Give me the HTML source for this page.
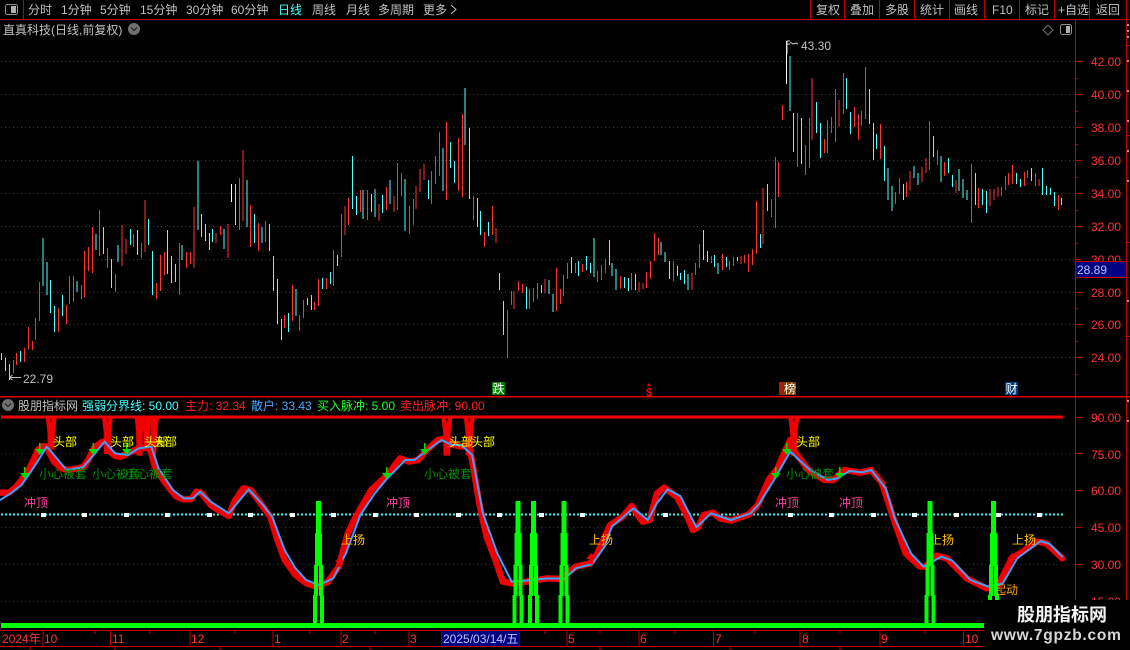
<!DOCTYPE html>
<html><head><meta charset="utf-8"><title>直真科技</title>
<style>
html,body{margin:0;padding:0;background:#000;width:1130px;height:650px;overflow:hidden}
svg{display:block}
text{font-family:"Liberation Sans","WenQuanYi Zen Hei","Noto Sans CJK SC",sans-serif;font-size:12px}
.n{fill:#c0c0c0}
.ax{fill:#ff3232}
.vs{vector-effect:non-scaling-stroke}
</style></head><body>
<svg width="1130" height="650" viewBox="0 0 1130 650" xmlns="http://www.w3.org/2000/svg">
<rect width="1130" height="650" fill="#000"/>

<!-- frame lines -->
<g stroke="#c00000" stroke-width="1" shape-rendering="crispEdges" fill="none">
<path d="M0 19.5H1130M23.5 0V19M810.5 0V19M844.5 0V19M879.5 0V19M914.5 0V19M949.5 0V19M984.5 0V19M1019.5 0V19M1054.5 0V19M1089.5 0V19"/>
<path d="M1075.5 20V600M1126.5 0V600M1126 45.5H1130M1126 135.5H1130M1126 242.5H1130M1126 336.5H1130"/>
<path d="M1075 61.5H1081M1075 78.5H1078M1075 94.5H1081M1075 111.5H1078M1075 127.5H1081M1075 144.5H1078M1075 160.5H1081M1075 177.5H1078M1075 193.5H1081M1075 210.5H1078M1075 226.5H1081M1075 243.5H1078M1075 259.5H1081M1075 292.5H1081M1075 308.5H1078M1075 324.5H1081M1075 341.5H1078M1075 357.5H1081M1075 374.5H1078"/>
<path d="M1075 417.5H1081M1075 453.5H1081M1075 490.5H1081M1075 527.5H1081M1075 564.5H1081"/>
</g>
<path d="M0 396.5H1130" stroke="#e00000" stroke-width="1.5" shape-rendering="crispEdges"/>
<path d="M1128 24V26M1128 30V32M1128 36V38M1128 60V62M1128 90V92M1128 120V122M1128 150V152M1128 180V182M1128 300V302M1128 400V402M1128 420V422" stroke="#a0a0a0" stroke-width="2" shape-rendering="crispEdges"/>

<!-- toolbar -->
<rect x="5.5" y="4.5" width="12" height="10" rx="2" fill="#000" stroke="#909090"/>
<rect x="11" y="6" width="5" height="7" fill="#b0b0b0"/>
<g class="n">
<text x="28" y="14" class="n">分时</text>
<text x="61" y="14" class="n">1分钟</text>
<text x="100" y="14" class="n">5分钟</text>
<text x="140" y="14" class="n">15分钟</text>
<text x="186" y="14" class="n">30分钟</text>
<text x="231" y="14" class="n">60分钟</text>
<text x="278" y="14" fill="#40ffff">日线</text>
<text x="312" y="14" class="n">周线</text>
<text x="346" y="14" class="n">月线</text>
<text x="378" y="14" class="n">多周期</text>
<text x="423" y="14" class="n">更多</text>
<path d="M451 5l5 4.5-5 4.5" fill="none" stroke="#c0c0c0"/>
<text x="816" y="14" class="n">复权</text>
<text x="850" y="14" class="n">叠加</text>
<text x="885" y="14" class="n">多股</text>
<text x="920" y="14" class="n">统计</text>
<text x="954" y="14" class="n">画线</text>
<text x="992" y="14" class="n">F10</text>
<text x="1025" y="14" class="n">标记</text>
<text x="1058" y="14" class="n">+自选</text>
<text x="1096" y="14" class="n">返回</text>
</g>

<!-- title -->
<text x="3" y="34" class="n">直真科技(日线,前复权)</text>
<circle cx="134" cy="29" r="6" fill="#707070"/>
<path d="M131 27.5l3 3 3-3" fill="none" stroke="#222" stroke-width="1.2"/>
<path d="M1048 25l5 5-5 5-5-5z" fill="none" stroke="#707070"/>
<rect x="1060.5" y="24.5" width="11" height="10" rx="2" fill="#000" stroke="#909090"/>
<rect x="1066" y="26" width="4" height="7" fill="#b0b0b0"/>

<!-- top grid -->
<path d="M1 61.5H1075M1 94.5H1075M1 127.5H1075M1 160.5H1075M1 193.5H1075M1 226.5H1075M1 259.5H1075M1 292.5H1075M1 324.5H1075M1 357.5H1075" stroke="#c80000" stroke-dasharray="1 3" shape-rendering="crispEdges"/>

<!-- candlesticks left half -->
<g transform="scale(.36036 1)" fill="none" shape-rendering="crispEdges" stroke-width="2.775">
<path stroke="#ff3232" d="M37 360V373M46 353V365M68 348V362M79 327V349M90 341V350M98 318V340M109 282V321M162 308V332M184 305V324M193 276V304M204 276V302M226 285V299M234 251V297M245 247V271M256 227V273M276 210V256M298 248V268M320 274V292M339 225V266M350 239V254M370 234V247M392 243V258M403 200V252M434 283V299M445 255V291M456 252V275M498 243V295M518 252V268M528 252V264M539 207V268M600 233V243M612 226V235M633 224V258M664 178V230M675 150V221M695 205V247M717 223V251M737 221V242M790 315V328M811 285V321M831 315V331M842 300V318M873 302V310M884 279V306M906 278V289M925 250V286M947 214V257M958 206V235M967 198V225M1000 190V212M1020 190V220M1052 204V221M1072 187V210M1093 196V212M1103 163V210M1114 173V196M1136 206V234M1147 199V225M1155 186V209M1166 169V192M1177 164V180M1197 171V204M1208 156V184M1219 132V176M1239 122V200M1272 138V191M1283 114V197M1314 196V220M1344 232V247M1366 206V235M1377 228V243M1408 310V358M1419 291V305M1427 291V309M1439 281V291M1450 284V293M1470 289V309M1481 288V302M1491 283V299M1513 279V293M1544 268V311M1555 289V304M1564 275V296"/>
<path stroke="#54ffff" d="M4 353V360M15 358V371M57 351V362M120 238V286M131 262V295M140 280V313M151 306V332M173 295V316M214 281V292M267 234V250M287 227V254M309 259V288M328 245V262M362 229V245M381 230V255M412 219V245M423 251V295M465 230V274M476 256V283M487 264V282M505 245V260M550 161V230M559 214V237M570 224V241M581 233V250M590 229V242M622 229V249M653 184V225M686 180V227M706 214V243M727 227V243M748 224V251M759 256V291M770 279V324M781 319V340M800 313V332M822 289V316M853 298V305M864 295V310M895 278V289M917 272V284M936 255V266M978 156V209M989 196V215M1008 190V219M1031 194V212M1041 189V217M1061 195V213M1082 180V204M1124 179V231M1189 180V199M1230 148V191M1250 142V168M1261 161V183M1291 88V145M1303 128V199M1325 198V227M1333 211V235M1355 222V236M1386 273V290M1397 301V335M1461 287V309M1502 285V293M1523 280V294M1534 294V312"/>
<path stroke="#ffffff" d="M642 184V202M26 364V380"/>
</g>
<!-- candlesticks right half -->
<g transform="translate(565 0) scale(.36036 1)" fill="none" shape-rendering="crispEdges" stroke-width="2.775">
<path stroke="#ff3232" d="M7 263V279M29 263V273M48 264V272M90 271V282M101 265V280M112 259V273M154 276V289M185 273V290M206 282V292M217 283V289M226 272V288M237 261V279M248 233V261M259 238V255M301 261V281M353 273V290M362 263V275M373 244V268M406 256V263M437 254V270M457 261V270M467 257V266M489 256V264M498 255V263M509 254V272M520 249V265M531 201V254M550 188V244M573 199V217M584 157V228M592 162V197M603 105V120M645 113V167M667 145V175M678 118V168M686 78V140M720 139V153M729 120V153M740 117V133M751 89V142M760 100V127M773 73V114M803 107V127M814 114V140M823 111V126M834 67V119M875 124V159M917 192V204M928 178V194M948 182V197M958 171V191M991 167V182M1002 158V173M1011 121V170M1033 150V165M1053 162V176M1085 180V193M1128 164V223M1147 188V208M1180 189V206M1190 189V200M1201 187V197M1211 187V196M1222 176V190M1231 173V185M1242 165V184M1275 172V186M1284 170V178M1305 173V186M1316 179V186M1369 195V210"/>
<path stroke="#54ffff" d="M18 257V273M38 261V276M59 256V270M71 263V273M81 238V277M123 240V265M131 263V276M142 269V290M165 277V288M176 278V291M195 274V290M267 242V255M278 252V262M290 261V279M312 266V276M320 273V280M331 270V284M342 274V290M384 230V260M395 251V262M415 255V267M425 263V274M448 257V267M478 257V261M542 234V248M562 184V211M625 56V111M634 113V152M656 118V164M698 102V133M709 123V158M781 78V109M792 112V134M845 89V124M856 123V160M864 134V149M886 146V181M897 168V200M908 186V211M939 184V200M969 166V178M980 173V185M1022 136V157M1044 156V182M1064 158V173M1075 175V187M1094 169V191M1105 179V198M1116 190V200M1139 173V205M1158 189V205M1169 191V213M1253 173V184M1264 179V187M1294 168V181M1325 168V195M1336 186V195M1347 188V195M1358 192V206M1378 198V205"/>
<path stroke="#ffffff" d="M614 41V84"/>
</g>

<!-- hi/lo marks -->
<path d="M787 54V41h3M787 44h3M790 42l3 2 3-1 2 1" fill="none" stroke="#d0d0d0"/>
<text x="801" y="50" fill="#c0c0c0">43.30</text>
<path d="M9.5 364V377.5H21M9.5 377.5l3-2.5M9.5 377.5l3 2.5" fill="none" stroke="#c0c0c0"/>
<text x="23" y="383" fill="#c0c0c0">22.79</text>

<!-- axis labels top -->
<g class="ax">
<text x="1091" y="66" class="ax">42.00</text>
<text x="1091" y="99" class="ax">40.00</text>
<text x="1091" y="132" class="ax">38.00</text>
<text x="1091" y="165" class="ax">36.00</text>
<text x="1091" y="198" class="ax">34.00</text>
<text x="1091" y="231" class="ax">32.00</text>
<text x="1091" y="264" class="ax">30.00</text>
<text x="1091" y="297" class="ax">28.00</text>
<text x="1091" y="329" class="ax">26.00</text>
<text x="1091" y="362" class="ax">24.00</text>
</g>
<rect x="1075.5" y="261.5" width="51" height="16" fill="#000080" stroke="#c00000"/>
<text x="1077" y="274" fill="#c0c0ff">28.89</text>

<!-- signal tags -->
<rect x="492" y="382" width="13" height="13" fill="#008000"/>
<text x="492.5" y="393" fill="#fff">跌</text>
<path d="M649 383l2 3h-4z" fill="#f00"/>
<text x="646" y="396" fill="#f00" style="font-weight:700;font-size:11px">$</text>
<rect x="779" y="382" width="17" height="13" fill="#804000"/>
<rect x="779" y="382" width="5" height="13" fill="#a02010"/>
<text x="784" y="393" fill="#fff">榜</text>
<rect x="1005" y="382" width="13" height="13" fill="#004080"/>
<text x="1005.5" y="393" fill="#fff">财</text>

<!-- lower header -->
<circle cx="8" cy="405" r="6" fill="#707070"/>
<path d="M5 403.5l3 3 3-3" fill="none" stroke="#222" stroke-width="1.2"/>
<text x="18" y="410" fill="#c0c0c0">股朋指标网</text>
<text x="82" y="410" fill="#40ffff">强弱分界线: 50.00</text>
<text x="185" y="410" fill="#ff2020">主力: 32.34</text>
<text x="251" y="410" fill="#4aa8ff">散户: 33.43</text>
<text x="317" y="410" fill="#20ff20">买入脉冲: 5.00</text>
<text x="400" y="410" fill="#ff2020">卖出脉冲: 90.00</text>

<!-- lower grid -->
<path d="M1 453.5H1075M1 490.5H1075M1 527.5H1075M1 564.5H1075M1 601.5H1075" stroke="#a80000" stroke-dasharray="1 3" shape-rendering="crispEdges"/>
<path d="M1 514.5H1063" stroke="#40f0f0" stroke-width="1.6" stroke-dasharray="2 2" shape-rendering="crispEdges"/>
<g fill="#fff">
<rect x="41" y="513" width="5" height="4"/><rect x="82" y="513" width="5" height="4"/><rect x="124" y="513" width="5" height="4"/><rect x="165" y="513" width="5" height="4"/><rect x="207" y="513" width="5" height="4"/><rect x="248" y="513" width="5" height="4"/><rect x="290" y="513" width="5" height="4"/><rect x="331" y="513" width="5" height="4"/><rect x="373" y="513" width="5" height="4"/><rect x="414" y="513" width="5" height="4"/><rect x="456" y="513" width="5" height="4"/><rect x="497" y="513" width="5" height="4"/><rect x="539" y="513" width="5" height="4"/><rect x="580" y="513" width="5" height="4"/><rect x="663" y="513" width="5" height="4"/><rect x="788" y="513" width="5" height="4"/><rect x="829" y="513" width="5" height="4"/><rect x="871" y="513" width="5" height="4"/><rect x="912" y="513" width="5" height="4"/><rect x="954" y="513" width="5" height="4"/><rect x="996" y="513" width="5" height="4"/><rect x="1037" y="513" width="5" height="4"/>
</g>

<!-- sell line with dips -->
<path d="M1 417H1063" stroke="#f00000" stroke-width="3" fill="none"/>
<g transform="translate(0 390) scale(.36036 .33333)" fill="none" stroke="#f00000" stroke-width="4.6" stroke-linejoin="miter">
<path class="vs" d="M133 80L138 125L139 172L145 172L146 125L151 80"/>
<path class="vs" d="M289 80L294 125L295 185L301 185L302 125L307 80"/>
<path class="vs" d="M380 80L384 125L385 190L389 190L390 125L393 80"/>
<path class="vs" d="M400 80L404 125L405 165L409 165L410 125L414 80"/>
<path class="vs" d="M426 80L424 125L421 190L427 190L430 125L435 80"/>
<path class="vs" d="M1231 80L1236 125L1237 190L1243 190L1244 125L1249 80"/>
<path class="vs" d="M1293 80L1298 125L1299 190L1305 190L1306 125L1311 80"/>
</g>
<g transform="translate(565 390) scale(.36036 .33333)" fill="none" stroke="#f00000" stroke-width="4.6" stroke-linejoin="miter">
<path class="vs" d="M626 80L631 125L632 190L638 190L639 125L644 80"/>
</g>

<!-- main curves -->
<g transform="translate(0 390) scale(.36036 .33333)" fill="none" stroke-linejoin="round" stroke-linecap="round">
<path class="vs" stroke="#f00000" stroke-width="6.4" d="M0 308L25 308L45 290L60 270L75 250L95 205L105 180L120 168L130 170L138 190L150 215L170 235L190 240L230 232L245 210L260 175L280 158L295 152L305 185L320 198L335 200L355 190L385 175L410 172L420 190L430 230L450 265L470 295L490 320L510 328L530 328L545 305L560 310L585 345L605 360L635 378L650 335L675 295L695 300L720 335L750 380L770 450L790 510L820 555L850 580L880 590L910 575L940 530L965 430L985 385L1030 300L1075 255L1110 205L1135 215L1160 210L1180 185L1215 150L1240 145L1260 165L1280 170L1300 165L1310 210L1330 340L1350 440L1375 510L1395 575L1420 580L1460 575L1520 565L1568 568"/>
<path class="vs" stroke="#3ca0ff" stroke-width="2" d="M0 330L30 310L60 285L95 230L130 170L150 195L185 240L230 232L260 195L290 155L320 190L355 195L385 175L420 170L440 235L480 300L510 325L535 325L555 305L585 335L635 370L690 298L730 345L755 380L790 480L820 535L850 570L885 585L925 565L960 490L1000 375L1040 310L1075 265L1125 210L1150 210L1225 150L1255 165L1280 165L1310 195L1340 370L1380 490L1420 575L1460 572L1520 565L1568 566"/>
</g>
<g transform="translate(565 390) scale(.36036 .33333)" fill="none" stroke-linejoin="round" stroke-linecap="round">
<path class="vs" stroke="#f00000" stroke-width="6.4" d="M0 555L30 530L70 520L90 490L125 405L160 380L185 348L215 395L235 390L255 310L275 293L310 320L335 370L355 420L370 410L385 375L410 368L430 385L460 392L510 373L535 345L565 270L590 235L610 185L625 150L640 190L680 245L720 270L745 270L775 240L820 248L850 240L880 280L910 380L945 490L985 530L1000 530L1030 497L1060 505L1115 565L1170 595L1200 590L1240 505L1270 485L1310 455L1335 460L1380 505"/>
<path class="vs" stroke="#3ca0ff" stroke-width="2" d="M0 565L30 535L75 522L110 470L130 410L190 355L230 390L255 340L285 298L320 318L365 412L405 370L460 390L515 370L540 340L580 270L625 185L650 210L680 240L730 270L755 265L790 243L825 247L850 240L890 295L915 385L960 490L995 530L1045 500L1075 512L1125 570L1175 590L1215 580L1255 505L1320 453L1345 462L1380 500"/>
</g>

<!-- red up arrows -->
<g fill="#f00000">
<path d="M340 556l5 6h-3v5h-4v-5h-3z"/>
<path d="M591 553l5 6h-3v5h-4v-5h-3z"/>
<path d="M1012 553l5 6h-3v5h-4v-5h-3z"/>
</g>

<!-- green down arrows -->
<g fill="#00d800" stroke="none">
<path d="M39 443h1.6v6h4l-4.800 6-4.800-6h4z"/>
<path d="M24 467h1.600v6h4l-4.800 6-4.800-6h4z"/>
<path d="M92.500 443h1.600v6h4l-4.800 6-4.800-6h4z"/>
<path d="M126 443h1.600v6h4l-4.800 6-4.800-6h4z"/>
<path d="M386 467h1.600v6h4l-4.800 6-4.800-6h4z"/>
<path d="M424 443h1.600v6h4l-4.800 6-4.800-6h4z"/>
<path d="M775 467h1.600v6h4l-4.800 6-4.800-6h4z"/>
<path d="M786 443h1.600v6h4l-4.800 6-4.800-6h4z"/>
<path d="M839 467h1.600v6h4l-4.800 6-4.800-6h4z"/>
</g>

<!-- labels -->
<g>
<text x="53" y="446" fill="#ffff00">头部</text>
<text x="110" y="446" fill="#ffff00">头部</text>
<text x="144" y="446" fill="#ffff00">头部</text>
<text x="153" y="446" fill="#ffff00">头部</text>
<text x="449" y="446" fill="#ffff00">头部</text>
<text x="471" y="446" fill="#ffff00">头部</text>
<text x="796" y="446" fill="#ffff00">头部</text>
<text x="39" y="478" fill="#009000">小心被套</text>
<text x="92" y="478" fill="#009000">小心被套</text>
<text x="125" y="478" fill="#009000">小心被套</text>
<text x="424" y="478" fill="#009000">小心被套</text>
<text x="786" y="478" fill="#009000">小心被套</text>
<text x="24" y="507" fill="#ff40a0">冲顶</text>
<text x="386" y="507" fill="#ff40a0">冲顶</text>
<text x="775" y="507" fill="#ff40a0">冲顶</text>
<text x="839" y="507" fill="#ff40a0">冲顶</text>
<text x="341" y="544" fill="#ffc000">上扬</text>
<text x="589" y="544" fill="#ffc000">上扬</text>
<text x="930" y="544" fill="#ffc000">上扬</text>
<text x="1012" y="544" fill="#ffc000">上扬</text>
<text x="994" y="594" fill="#ffa000">起动</text>
</g>

<!-- buy pulse -->
<rect x="1" y="623" width="984" height="5" fill="#00ff00"/>
<g fill="#00ff00">
<g transform="translate(318.5 0)"><rect x="-2.500" y="501" width="5" height="33"/><rect x="-3.500" y="533" width="7" height="33"/><rect x="-4.500" y="565" width="4" height="31"/><rect x="0.500" y="565" width="4" height="31"/><rect x="-5.500" y="595" width="4" height="32"/><rect x="1.500" y="595" width="4" height="32"/></g>
<g transform="translate(518 0)"><rect x="-2.500" y="501" width="5" height="33"/><rect x="-3.500" y="533" width="7" height="33"/><rect x="-4.500" y="565" width="4" height="31"/><rect x="0.500" y="565" width="4" height="31"/><rect x="-5.500" y="595" width="4" height="32"/><rect x="1.500" y="595" width="4" height="32"/></g>
<g transform="translate(533.500 0)"><rect x="-2.500" y="501" width="5" height="33"/><rect x="-3.500" y="533" width="7" height="33"/><rect x="-4.500" y="565" width="4" height="31"/><rect x="0.500" y="565" width="4" height="31"/><rect x="-5.500" y="595" width="4" height="32"/><rect x="1.500" y="595" width="4" height="32"/></g>
<g transform="translate(564 0)"><rect x="-2.500" y="501" width="5" height="33"/><rect x="-3.500" y="533" width="7" height="33"/><rect x="-4.500" y="565" width="4" height="31"/><rect x="0.500" y="565" width="4" height="31"/><rect x="-5.500" y="595" width="4" height="32"/><rect x="1.500" y="595" width="4" height="32"/></g>
<g transform="translate(930 0)"><rect x="-2.500" y="501" width="5" height="33"/><rect x="-3.500" y="533" width="7" height="33"/><rect x="-4.500" y="565" width="4" height="31"/><rect x="0.500" y="565" width="4" height="31"/><rect x="-5.500" y="595" width="4" height="32"/><rect x="1.500" y="595" width="4" height="32"/></g>
<g transform="translate(993.500 0)"><rect x="-2.500" y="501" width="5" height="33"/><rect x="-3.500" y="533" width="7" height="33"/><rect x="-4.500" y="565" width="4" height="31"/><rect x="0.500" y="565" width="4" height="31"/><rect x="-5.500" y="595" width="4" height="32"/><rect x="1.500" y="595" width="4" height="32"/></g>
</g>

<!-- lower axis labels -->
<text x="1091" y="422" class="ax">90.00</text>
<text x="1091" y="459" class="ax">75.00</text>
<text x="1091" y="495" class="ax">60.00</text>
<text x="1091" y="532" class="ax">45.00</text>
<text x="1091" y="569" class="ax">30.00</text>
<text x="1091" y="606" class="ax">15.00</text>

<!-- time axis -->
<path d="M0 630.500H1130M0 646.500H1130M43 631V646M110.500 631V646M190 631V646M273 631V646M341 631V646M409 631V646M442 631V646M519 631V646M567 631V646M639 631V646M713.500 631V646M800 631V646M880 631V646M963.500 631V646" stroke="#c00000" shape-rendering="crispEdges" fill="none"/>
<path d="M95 631V634M150 631V634M235 631V634M310 631V634M375 631V634M545 631V634M600 631V634M675 631V634M755 631V634M840 631V634M925 631V634M30 646V650M115 646V650M220 646V650M370 646V650M600 646V650M730 646V650M840 646V650" stroke="#c00000" shape-rendering="crispEdges"/>
<rect x="442" y="631" width="77" height="15" fill="#000080"/>
<g>
<text x="2" y="643" class="ax">2024年</text>
<text x="44" y="643" class="ax">10</text>
<text x="112" y="643" class="ax">11</text>
<text x="191" y="643" class="ax">12</text>
<text x="274" y="643" class="ax">1</text>
<text x="342" y="643" class="ax">2</text>
<text x="410" y="643" class="ax">3</text>
<text x="443" y="643" fill="#c0c0ff">2025/03/14/五</text>
<text x="568" y="643" class="ax">5</text>
<text x="640" y="643" class="ax">6</text>
<text x="715" y="643" class="ax">7</text>
<text x="802" y="643" class="ax">8</text>
<text x="881" y="643" class="ax">9</text>
<text x="965" y="643" class="ax">10</text>
</g>

<!-- watermark -->
<rect x="984" y="600" width="146" height="50" fill="#000"/>
<text x="1017" y="621" fill="#f4f4f4" style="font-size:18px;font-weight:700">股朋指标网</text>
<text x="991" y="640" fill="#d8d8d8" style="font-size:15.500px;font-weight:700;letter-spacing:.75px">www.7gpzb.com</text>
</svg>
</body></html>
